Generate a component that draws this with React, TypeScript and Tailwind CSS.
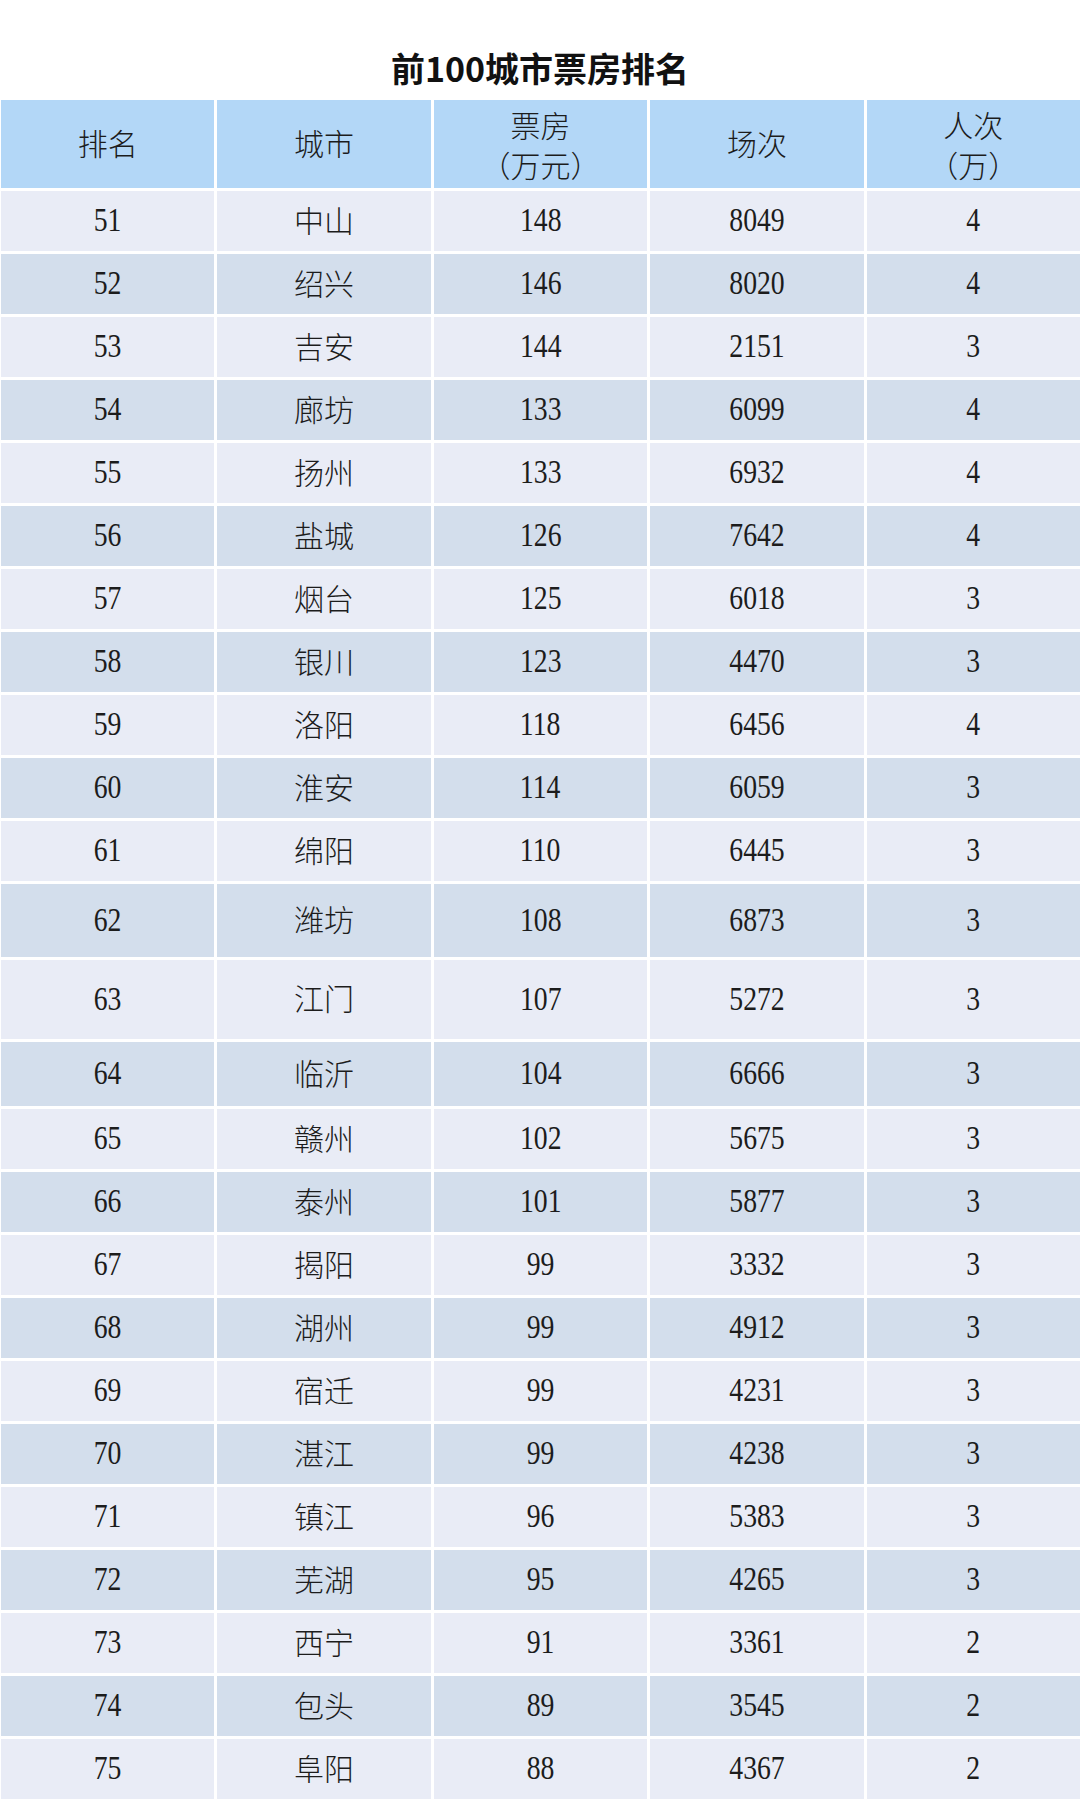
const rows: [string, string, string, string, string, string?][] = [
  ["51", "中山", "148", "8049", "4"],
  ["52", "绍兴", "146", "8020", "4"],
  ["53", "吉安", "144", "2151", "3"],
  ["54", "廊坊", "133", "6099", "4"],
  ["55", "扬州", "133", "6932", "4"],
  ["56", "盐城", "126", "7642", "4"],
  ["57", "烟台", "125", "6018", "3"],
  ["58", "银川", "123", "4470", "3"],
  ["59", "洛阳", "118", "6456", "4"],
  ["60", "淮安", "114", "6059", "3"],
  ["61", "绵阳", "110", "6445", "3"],
  ["62", "潍坊", "108", "6873", "3", "h-[73px]"],
  ["63", "江门", "107", "5272", "3", "h-[79px]"],
  ["64", "临沂", "104", "6666", "3", "h-[64px]"],
  ["65", "赣州", "102", "5675", "3"],
  ["66", "泰州", "101", "5877", "3"],
  ["67", "揭阳", "99", "3332", "3"],
  ["68", "湖州", "99", "4912", "3"],
  ["69", "宿迁", "99", "4231", "3"],
  ["70", "湛江", "99", "4238", "3"],
  ["71", "镇江", "96", "5383", "3"],
  ["72", "芜湖", "95", "4265", "3"],
  ["73", "西宁", "91", "3361", "2"],
  ["74", "包头", "89", "3545", "2"],
  ["75", "阜阳", "88", "4367", "2"],
];

const num = "font-['Liberation_Serif','Noto_Sans_CJK_SC',serif] text-[33px] scale-x-[0.84]";
const cjk = "font-['Noto_Sans_CJK_SC',sans-serif] text-[30px] font-light";

function Cell({ children, bg }: { children: React.ReactNode; bg: string }) {
  return (
    <div className={`flex flex-col items-center justify-center text-[#1c1c1c] ${bg}`}>
      {children}
    </div>
  );
}

export default function App() {
  return (
    <div className="w-[1080px] h-[1800px] bg-white overflow-hidden">
      <div className="h-[100px] pt-[44px] text-center">
        <h1 className="font-['Noto_Sans_CJK_SC',sans-serif] font-bold text-[34px] leading-[48px] text-[#111]">
          前100城市票房排名
        </h1>
      </div>
      <div className="flex flex-col gap-[3px] pl-[1px]">
        <div className="grid grid-cols-5 gap-[3px] h-[88px]">
          <Cell bg="bg-[#b3d7f7]"><span className={`${cjk} leading-none pb-[5px]`}>排名</span></Cell>
          <Cell bg="bg-[#b3d7f7]"><span className={`${cjk} leading-none pb-[5px]`}>城市</span></Cell>
          <Cell bg="bg-[#b3d7f7]">
            <span className={`${cjk} leading-[40px]`}>票房</span>
            <span className={`${cjk} leading-[40px]`}>（万元）</span>
          </Cell>
          <Cell bg="bg-[#b3d7f7]"><span className={`${cjk} leading-none pb-[5px]`}>场次</span></Cell>
          <Cell bg="bg-[#b3d7f7]">
            <span className={`${cjk} leading-[40px]`}>人次</span>
            <span className={`${cjk} leading-[40px]`}>（万）</span>
          </Cell>
        </div>
        {rows.map((r, i) => {
          const bg = i % 2 === 0 ? "bg-[#e9ecf6]" : "bg-[#d3deec]";
          return (
            <div key={r[0]} className={`grid grid-cols-5 gap-[3px] ${r[5] ?? "h-[60px]"}`}>
              <Cell bg={bg}><span className={num}>{r[0]}</span></Cell>
              <Cell bg={bg}><span className={`${cjk} leading-none pb-[5px]`}>{r[1]}</span></Cell>
              <Cell bg={bg}><span className={num}>{r[2]}</span></Cell>
              <Cell bg={bg}><span className={num}>{r[3]}</span></Cell>
              <Cell bg={bg}><span className={num}>{r[4]}</span></Cell>
            </div>
          );
        })}
      </div>
    </div>
  );
}
